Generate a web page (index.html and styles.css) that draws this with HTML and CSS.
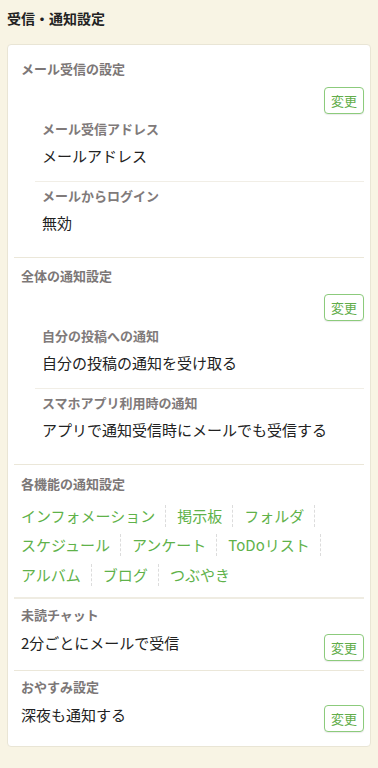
FILE: index.html
```html
<!DOCTYPE html>
<html lang="ja">
<head>
<meta charset="utf-8">
<link rel="stylesheet" href="styles.css">
</head>
<body>
<h1 class="page-title">受信・通知設定</h1>
<div class="card">
  <section class="section sec-first">
    <h2 class="sec-head">メール受信の設定</h2>
    <div class="btn-row"><button class="btn">変更</button></div>
    <div class="sub">
      <div class="sub-item">
        <div class="sub-label">メール受信アドレス</div>
        <div class="value">メールアドレス</div>
      </div>
      <div class="sub-item last">
        <div class="sub-label">メールからログイン</div>
        <div class="value">無効</div>
      </div>
    </div>
  </section>
  <section class="section">
    <h2 class="sec-head">全体の通知設定</h2>
    <div class="btn-row"><button class="btn">変更</button></div>
    <div class="sub">
      <div class="sub-item">
        <div class="sub-label">自分の投稿への通知</div>
        <div class="value">自分の投稿の通知を受け取る</div>
      </div>
      <div class="sub-item last">
        <div class="sub-label">スマホアプリ利用時の通知</div>
        <div class="value">アプリで通知受信時にメールでも受信する</div>
      </div>
    </div>
  </section>
  <section class="section sec-links">
    <h2 class="sec-head">各機能の通知設定</h2>
    <div class="links">
      <div class="link-row"><a class="link">インフォメーション</a><a class="link">掲示板</a><a class="link">フォルダ</a></div>
      <div class="link-row"><a class="link">スケジュール</a><a class="link">アンケート</a><a class="link">ToDoリスト</a></div>
      <div class="link-row"><a class="link">アルバム</a><a class="link">ブログ</a><a class="link plain">つぶやき</a></div>
    </div>
  </section>
  <section class="section sec-inline">
    <h2 class="sec-head">未読チャット</h2>
    <div class="inline-row">
      <div class="value">2分ごとにメールで受信</div>
      <button class="btn">変更</button>
    </div>
  </section>
  <section class="section sec-inline sec-last">
    <h2 class="sec-head">おやすみ設定</h2>
    <div class="inline-row">
      <div class="value">深夜も通知する</div>
      <button class="btn">変更</button>
    </div>
  </section>
</div>
</body>
</html>
```

FILE: styles.css
```css
* { box-sizing: border-box; }
html, body { margin: 0; padding: 0; }
body {
  background: #f8f4e4;
  font-family: "Noto Sans CJK JP", "Noto Sans", sans-serif;
  color: #222;
  padding: 8px 7px 22px;
}
.page-title {
  margin: 0;
  font-size: 14px;
  font-weight: bold;
  line-height: 20px;
  color: #222;
}
.card {
  margin-top: 16px;
  background: #fff;
  border: 1px solid #e9e5d5;
  border-radius: 4px;
  padding: 0 6px;
}
.section {
  border-bottom: 1px solid #ebe7d9;
  padding: 8px 0 10px;
}
.sec-first { padding-top: 14px; }
.sec-head {
  margin: 0;
  padding-left: 7px;
  font-size: 13px;
  font-weight: bold;
  line-height: 20px;
  color: #7c7777;
}
.btn-row {
  display: flex;
  justify-content: flex-end;
  margin-top: 8px;
  margin-bottom: 4px;
}
.btn {
  width: 40px;
  height: 27px;
  padding: 0;
  margin-right: 0;
  background: #fff;
  border: 1px solid #8ccb7c;
  border-radius: 4px;
  box-shadow: 0 1px 1px rgba(0,0,0,0.08);
  color: #62ad4a;
  font-family: "Noto Sans CJK JP", sans-serif;
  font-size: 13px;
  line-height: 25px;
}
.sub { margin-left: 21px; }
.sub-item {
  padding: 1px 0 13px 7px;
  border-bottom: 1px solid #f1eee6;
}
.sub-item + .sub-item { padding-top: 4px; }
.sub-item.last { border-bottom: none; padding-bottom: 12px; }
.sub-label {
  font-size: 13px;
  font-weight: bold;
  line-height: 20px;
  color: #807a7a;
}
.value {
  margin-top: 5px;
  font-size: 15px;
  line-height: 24px;
  color: #222;
}
.sec-links { padding-top: 9px; padding-bottom: 7px; border-bottom-width: 2px; border-bottom-color: #efece2; }
.links { margin-top: 7px; padding-left: 7px; }
.link-row {
  display: flex;
  align-items: center;
  height: 29.5px;
}
.link {
  font-size: 15px;
  line-height: 22px;
  color: #5fb24a;
  padding: 0 10px 0 11px;
  border-right: 1px dashed #dcdcdc;
  white-space: nowrap;
}
.link:first-child { padding-left: 0; }
.link.plain { border-right: none; }
.sec-inline { padding-top: 6px; padding-bottom: 9px; }
.inline-row {
  display: flex;
  justify-content: space-between;
  align-items: flex-start;
  margin-top: 6px;
  padding-left: 7px;
}
.inline-row .value { margin-top: 0; }
.inline-row .btn { margin-top: 3px; }
.sec-last { border-bottom: none; padding-bottom: 14px; }
.sec-last .inline-row { margin-top: 6px; }
.sec-last .inline-row .btn { margin-top: 2px; }
```
